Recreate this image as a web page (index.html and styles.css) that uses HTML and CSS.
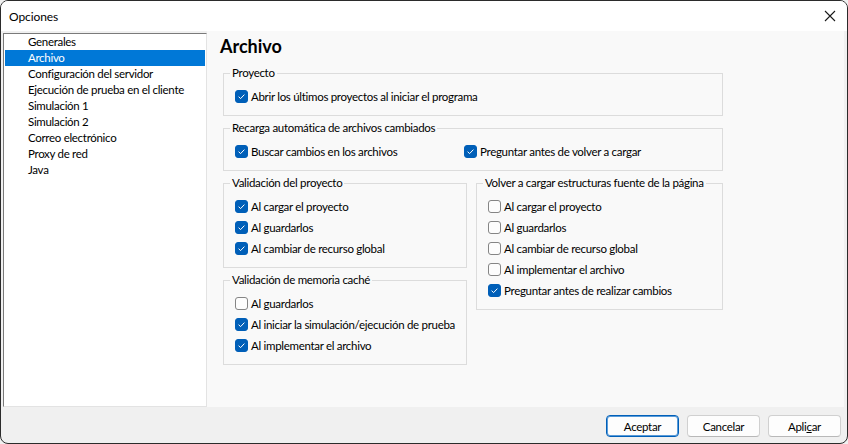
FILE: index.html
```html
<!DOCTYPE html>
<html>
<head>
    <title>Opciones</title>
    <link rel="stylesheet" href="styles.css">
</head>
<body>
    <div class="window">
        <div class="titlebar">
            <span class="title">Opciones</span>
            <svg class="close" width="12" height="12" viewBox="0 0 12 12">
                <path d="M1 1 L11 11 M11 1 L1 11" stroke="#1a1a1a" stroke-width="1.1" fill="none"/>
            </svg>
        </div>

        <div class="main">
            <ul class="nav">
                <li>Generales</li>
                <li class="selected">Archivo</li>
                <li>Configuración del servidor</li>
                <li>Ejecución de prueba en el cliente</li>
                <li>Simulación 1</li>
                <li>Simulación 2</li>
                <li>Correo electrónico</li>
                <li>Proxy de red</li>
                <li>Java</li>
            </ul>

            <div class="panel">
                <h1>Archivo</h1>

                <fieldset class="group wide">
                    <legend>Proyecto</legend>
                    <label class="check"><span class="box on"><svg width="13" height="13" viewBox="0 0 13 13"><path d="M3.6 6.7 L5.6 8.6 L9.4 4.6" stroke="#fff" stroke-width="1" fill="none"/></svg></span>Abrir los últimos proyectos al iniciar el programa</label>
                </fieldset>

                <fieldset class="group wide">
                    <legend>Recarga automática de archivos cambiados</legend>
                    <div class="pair">
                        <label class="check"><span class="box on"><svg width="13" height="13" viewBox="0 0 13 13"><path d="M3.6 6.7 L5.6 8.6 L9.4 4.6" stroke="#fff" stroke-width="1" fill="none"/></svg></span>Buscar cambios en los archivos</label>
                        <label class="check"><span class="box on"><svg width="13" height="13" viewBox="0 0 13 13"><path d="M3.6 6.7 L5.6 8.6 L9.4 4.6" stroke="#fff" stroke-width="1" fill="none"/></svg></span>Preguntar antes de volver a cargar</label>
                    </div>
                </fieldset>

                <div class="columns">
                    <div class="col left">
                        <fieldset class="group">
                            <legend>Validación del proyecto</legend>
                            <label class="check"><span class="box on"><svg width="13" height="13" viewBox="0 0 13 13"><path d="M3.6 6.7 L5.6 8.6 L9.4 4.6" stroke="#fff" stroke-width="1" fill="none"/></svg></span>Al cargar el proyecto</label>
                            <label class="check"><span class="box on"><svg width="13" height="13" viewBox="0 0 13 13"><path d="M3.6 6.7 L5.6 8.6 L9.4 4.6" stroke="#fff" stroke-width="1" fill="none"/></svg></span>Al guardarlos</label>
                            <label class="check"><span class="box on"><svg width="13" height="13" viewBox="0 0 13 13"><path d="M3.6 6.7 L5.6 8.6 L9.4 4.6" stroke="#fff" stroke-width="1" fill="none"/></svg></span>Al cambiar de recurso global</label>
                        </fieldset>
                        <fieldset class="group">
                            <legend>Validación de memoria caché</legend>
                            <label class="check"><span class="box"></span>Al guardarlos</label>
                            <label class="check"><span class="box on"><svg width="13" height="13" viewBox="0 0 13 13"><path d="M3.6 6.7 L5.6 8.6 L9.4 4.6" stroke="#fff" stroke-width="1" fill="none"/></svg></span>Al iniciar la simulación/ejecución de prueba</label>
                            <label class="check"><span class="box on"><svg width="13" height="13" viewBox="0 0 13 13"><path d="M3.6 6.7 L5.6 8.6 L9.4 4.6" stroke="#fff" stroke-width="1" fill="none"/></svg></span>Al implementar el archivo</label>
                        </fieldset>
                    </div>
                    <div class="col right">
                        <fieldset class="group">
                            <legend>Volver a cargar estructuras fuente de la página</legend>
                            <label class="check"><span class="box"></span>Al cargar el proyecto</label>
                            <label class="check"><span class="box"></span>Al guardarlos</label>
                            <label class="check"><span class="box"></span>Al cambiar de recurso global</label>
                            <label class="check"><span class="box"></span>Al implementar el archivo</label>
                            <label class="check"><span class="box on"><svg width="13" height="13" viewBox="0 0 13 13"><path d="M3.6 6.7 L5.6 8.6 L9.4 4.6" stroke="#fff" stroke-width="1" fill="none"/></svg></span>Preguntar antes de realizar cambios</label>
                        </fieldset>
                    </div>
                </div>
            </div>
        </div>

        <div class="footer">
            <button class="btn default">Aceptar</button>
            <button class="btn">Cancelar</button>
            <button class="btn">Apli<span class="mnemonic">c</span>ar</button>
        </div>
    </div>
</body>
</html>
```

FILE: styles.css
```css
body {
    margin: 0;
    background-color: #f0f0f0;
    font-family: "Segoe UI", Lato, "Liberation Sans", sans-serif;
    font-size: 11.5px;
    letter-spacing: -0.3px;
    color: #000;
}

.window {
    width: 848px;
    height: 444px;
    box-sizing: border-box;
    border: 1px solid #2b2b2b;
    border-radius: 8px;
    background-color: #f0f0f0;
    overflow: hidden;
    display: flex;
    flex-direction: column;
}

.titlebar {
    height: 30px;
    background-color: #fff;
    display: flex;
    align-items: center;
    justify-content: space-between;
    padding: 0 9px 0 8px;
    flex-shrink: 0;
}

.title {
    font-size: 12px;
    letter-spacing: -0.1px;
    margin-top: 1px;
}

.close {
    margin-right: 2px;
    margin-top: -1px;
}

.main {
    display: flex;
    height: 376px;
    flex-shrink: 0;
}

/* left navigation list */
.nav {
    list-style: none;
    margin: 2px 0 0 2px;
    padding: 0;
    width: 204px;
    box-sizing: border-box;
    background-color: #fff;
    border-left: 1px solid #7a7a7a;
    border-top: 1px solid #7a7a7a;
    border-right: 1px solid #e3e3e3;
    border-bottom: 1px solid #e3e3e3;
}

.nav li {
    height: 16px;
    line-height: 16px;
    padding-left: 23px;
    margin: 0 1px;
    white-space: nowrap;
}

.nav li.selected {
    background-color: #0078d7;
    color: #fff;
}

/* right panel */
.panel {
    flex: 1;
    margin-right: 3px;
    background-color: #f9f9f9;
    padding: 3px 0 0 16px;
}

h1 {
    font-size: 18px;
    font-weight: bold;
    letter-spacing: 0;
    margin: 0 0 7px -3px;
    height: 24px;
    line-height: 24px;
}

.group {
    margin: 0 0 4px 0;
    padding: 5px 0 8px 11px;
    border: 1px solid #dcdcdc;
    min-width: 0;
}

.group.wide {
    width: 500px;
    box-sizing: border-box;
}

.group legend {
    padding: 0 2px;
    margin-left: -5px;
    line-height: 16px;
    height: 16px;
    white-space: nowrap;
}

.check {
    display: flex;
    align-items: center;
    height: 21px;
    white-space: nowrap;
}

.box {
    width: 13px;
    height: 13px;
    box-sizing: border-box;
    border: 1px solid #858585;
    border-radius: 3px;
    background-color: #fdfdfd;
    margin-right: 3px;
    flex-shrink: 0;
    position: relative;
}

.box.on {
    border-color: #005fb8;
    background-color: #005fb8;
}

.box svg {
    position: absolute;
    left: -1px;
    top: -1px;
}

.pair {
    display: grid;
    grid-template-columns: 229px auto;
}

.columns {
    display: flex;
    gap: 9px;
}

.col.left {
    width: 244px;
}

.col.right {
    width: 247px;
}

.col .group {
    width: 100%;
    box-sizing: border-box;
}

/* bottom buttons */
.footer {
    flex: 1;
    display: flex;
    justify-content: flex-end;
    gap: 8px;
    padding: 8px 6px 0 0;
}

.btn {
    width: 73px;
    height: 22px;
    box-sizing: border-box;
    border: 1px solid #d0d0d0;
    border-bottom-color: #b8b8b8;
    border-radius: 4px;
    background-color: #fdfdfd;
    font-family: inherit;
    font-size: 11.5px;
    letter-spacing: -0.3px;
    color: #000;
    padding: 0;
}

.btn.default {
    border: 1px solid #005fb8;
    box-shadow: inset 0 0 0 1px #5a9bd8;
}

.mnemonic {
    text-decoration: underline;
}
```
